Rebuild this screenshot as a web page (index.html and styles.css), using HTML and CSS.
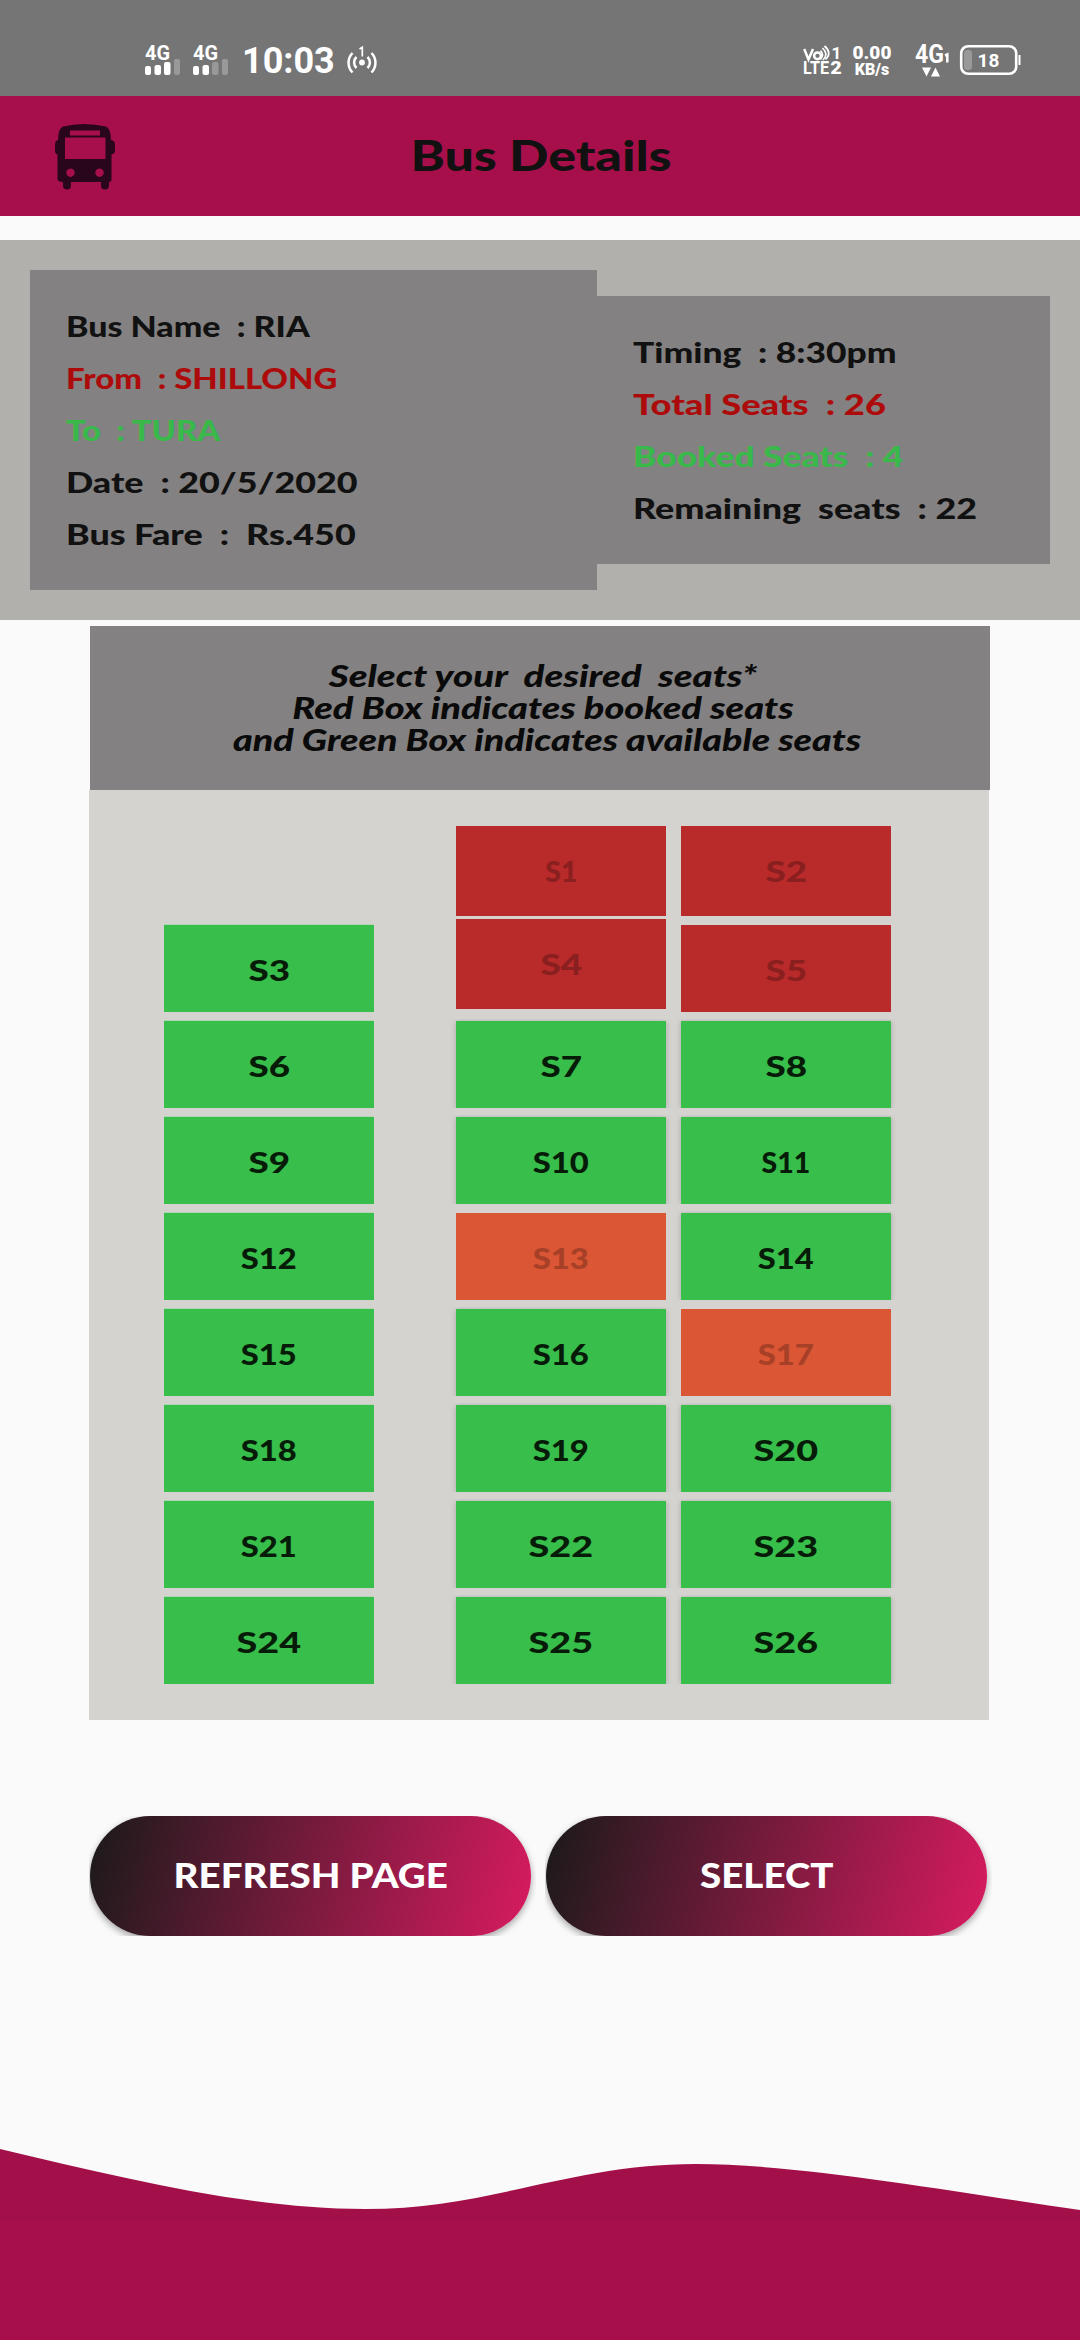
FILE: index.html
```html
<!DOCTYPE html>
<html lang="en">
<head>
<meta charset="utf-8">
<title>Bus Details</title>
<link rel="stylesheet" href="styles.css">
</head>
<body>
<div class="screen">
  <div class="status">
    <svg class="signal" width="36" height="32" viewBox="0 0 36 32">
      <text x="0" y="16" font-size="20.5" font-weight="700" textLength="25" lengthAdjust="spacingAndGlyphs">4G</text>
      <rect x="0" y="22" width="6" height="9" rx="2"/><rect x="9.5" y="21" width="6.5" height="10" rx="2"/><rect x="19" y="18" width="6.5" height="13" rx="2"/><rect class="off" x="29" y="15" width="6" height="16" rx="2"/>
    </svg>
    <svg class="signal" width="36" height="32" viewBox="0 0 36 32">
      <text x="0" y="16" font-size="20.5" font-weight="700" textLength="25" lengthAdjust="spacingAndGlyphs">4G</text>
      <rect x="0" y="22" width="6" height="9" rx="2"/><rect x="9.5" y="21" width="6.5" height="10" rx="2"/><rect class="off" x="19" y="18" width="6.5" height="13" rx="2"/><rect class="off" x="29" y="15" width="6" height="16" rx="2"/>
    </svg>
    <span class="clock">10:03</span>
    <svg class="hotspot" width="32" height="32" viewBox="0 0 32 32">
      <circle cx="16" cy="18.5" r="2.9"/>
      <path class="line" d="M10.500 13a7.500 7.500 0 0 0 0 11M21.500 13a7.500 7.500 0 0 1 0 11M6.500 9a14 14 0 0 0 0 19.500M25.500 9a14 14 0 0 1 0 19.500"/>
      <path class="thin" d="M13.500 5l2.800-1.800v9.300"/>
    </svg>
    <svg class="volte" width="40" height="32" viewBox="0 0 40 32">
      <path class="line" d="M1.200 5l4.300 10.500L10 5"/>
      <circle class="line" cx="14.500" cy="11.800" r="3.400"/>
      <path class="thin" d="M17.500 6.500q4 4 0 9M19.500 4q6.500 6 .5 12M21.500 2q8 7 1 13.500"/>
      <text x="28.500" y="15" font-size="17" font-weight="700">1</text>
      <text x="0" y="29.500" font-size="17.500" font-weight="700" textLength="26" lengthAdjust="spacingAndGlyphs">LTE</text>
      <text x="27.200" y="29.500" font-size="18" font-weight="900" textLength="11.500" lengthAdjust="spacingAndGlyphs">2</text>
    </svg>
    <div class="speed"><b>0.00</b><b class="unit">KB/s</b></div>
    <svg class="data" width="34" height="36" viewBox="0 0 34 36">
      <text x="0" y="18.500" font-size="25" font-weight="700" textLength="29" lengthAdjust="spacingAndGlyphs">4G</text>
      <path class="line" d="M30 11.500l2.300-1v8"/>
      <path d="M7 23.500h9l-4.500 9zM16 32.500h9l-4.500-9z"/>
    </svg>
    <svg class="battery" width="61" height="32" viewBox="0 0 61 32">
      <rect class="off" x="4" y="6" width="8" height="20" rx="3"/>
      <rect class="case" x="1.200" y="2.200" width="55" height="27.600" rx="7"/>
      <path d="M58.500 11h2v10h-2z"/>
      <text x="28.500" y="22.500" font-size="19" font-weight="700" text-anchor="middle">18</text>
    </svg>
  </div>

  <header class="appbar">
    <svg class="bus" width="60" height="66" viewBox="0 0 60 66">
      <path fill-rule="evenodd" d="M8 2.500Q29-2.500 51 2.500Q55.500 4 56 16q4 .500 4 5v5q0 4-3.500 4.500V56q0 2-2.500 2v3.500q0 4-4 4t-4-4V58H16v3.500q0 4-4 4t-4-4V58q-5.500 0-5.500-3V30.500Q0 30 0 26v-5q0-4.500 3-5Q3.500 4 8 2.500zM15 6.500v5h30v-5zM10 13.500v21.500h40.500V13.500zM15.500 44.500a4.200 4.200 0 1 0 .01 0zM44.500 44.500a4.200 4.200 0 1 0 .01 0z"/>
    </svg>
    <h1 class="title">Bus Details</h1>
  </header>

  <section class="info">
    <div class="card route">
      <p class="name">Bus Name  : RIA</p>
      <p class="from red">From  : SHILLONG</p>
      <p class="to green">To  : TURA</p>
      <p class="date">Date  : 20/5/2020</p>
      <p class="fare">Bus Fare  :  Rs.450</p>
    </div>
    <div class="card counts">
      <p class="timing">Timing  : 8:30pm</p>
      <p class="total red">Total Seats  : 26</p>
      <p class="booked-count green">Booked Seats  : 4</p>
      <p class="remaining">Remaining  seats  : 22</p>
    </div>
  </section>

  <div class="caption">
    <p class="cap1">Select your  desired  seats*</p>
    <p class="cap2">Red Box indicates booked seats</p>
    <p class="cap3">and Green Box indicates available seats</p>
  </div>

  <section class="seats">
    <div class="col window">
      <div class="seat one"><span>S3</span></div>
      <div class="seat one"><span>S6</span></div>
      <div class="seat one"><span>S9</span></div>
      <div class="seat"><span>S12</span></div>
      <div class="seat"><span>S15</span></div>
      <div class="seat"><span>S18</span></div>
      <div class="seat"><span>S21</span></div>
      <div class="seat wide"><span>S24</span></div>
    </div>
    <div class="col middle">
      <div class="seat booked narrow"><span>S1</span></div>
      <div class="seat booked raised one"><span>S4</span></div>
      <div class="seat one"><span>S7</span></div>
      <div class="seat"><span>S10</span></div>
      <div class="seat held"><span>S13</span></div>
      <div class="seat"><span>S16</span></div>
      <div class="seat"><span>S19</span></div>
      <div class="seat wide"><span>S22</span></div>
      <div class="seat wide"><span>S25</span></div>
    </div>
    <div class="col">
      <div class="seat booked tall one"><span>S2</span></div>
      <div class="seat booked one"><span>S5</span></div>
      <div class="seat one"><span>S8</span></div>
      <div class="seat narrow"><span>S11</span></div>
      <div class="seat"><span>S14</span></div>
      <div class="seat held"><span>S17</span></div>
      <div class="seat wide"><span>S20</span></div>
      <div class="seat wide"><span>S23</span></div>
      <div class="seat wide"><span>S26</span></div>
    </div>
  </section>

  <div class="actions">
    <div class="button"><span>REFRESH PAGE</span></div>
    <div class="button"><span>SELECT</span></div>
  </div>

  <svg class="wave" width="1080" height="191" viewBox="0 0 1080 191">
    <path fill="#a30f48" d="M0 0C120 28 245 60 365 60C490 60 570 15 696 15C800 15 960 44 1080 61V191H0z"/>
    <path fill="#a60f4a" d="M0 71h1080v120H0z"/>
  </svg>
</div>
</body>
</html>
```
FILE: styles.css
```css
* { box-sizing: border-box; }
body { margin: 0; background: #fafafa; color: #111; font-family: Lato, sans-serif; font-weight: 900; }
p, h1 { margin: 0; white-space: pre; }
.screen { width: 1080px; height: 2340px; display: flex; flex-direction: column; overflow: hidden; }

.status { height: 96px; flex: none; background: #757575; display: flex; align-items: flex-start; padding: 44px 60px 0 145px; color: #fff; font-family: Roboto, sans-serif; }
.status svg { flex: none; fill: #fff; overflow: visible; }
.status text { font-family: Roboto, sans-serif; }
.status .off { fill: #999; }
.status .line { fill: none; stroke: #fff; stroke-width: 2.5; }
.status .thin { fill: none; stroke: #fff; stroke-width: 1.7; }
.status .case { fill: none; stroke: #fff; stroke-width: 2.6; }
.signal { margin-right: 12px; }
.clock { width: 92px; font-size: 36px; line-height: 34px; font-weight: 700; margin-left: 1px; }
.hotspot { margin-left: 12px; }
.volte { margin-left: 425px; }
.speed { width: 36px; margin-left: 11px; display: flex; flex-direction: column; align-items: center; font-size: 19px; line-height: 18px; font-weight: 700; }
.unit { font-size: 16px; line-height: 15px; }
.data { margin-left: 25px; }
.battery { margin-left: 11px; }

.appbar { height: 120px; flex: none; background: #a60f4a; display: flex; align-items: flex-start; padding: 28px 0 0 55px; }
.bus { flex: none; fill: #29061a; }
.title { width: 850px; margin: -29px 0 0 1px; text-align: center; font-size: 41.5px; line-height: 120px; font-weight: 900; transform: scaleX(1.25); }

.info { height: 380px; flex: none; margin-top: 24px; padding: 0 30px; background: #b1b0ad; display: flex; align-items: center; }
.card { background: #838181; padding: 30px 36px; font-size: 29px; line-height: 52px; }
.card p { transform-origin: 0 50%; }
.route { width: 567px; }
.counts { width: 453px; }
.red { color: #ad0b0b; }
.green { color: #38b94a; }
.name { transform: scaleX(1.17); }
.from { transform: scaleX(1.135); }
.to { transform: scaleX(1.13); }
.date, .fare, .remaining { transform: scaleX(1.235); }
.timing, .booked-count { transform: scaleX(1.22); }
.total { transform: scaleX(1.25); }

.caption { width: 900px; height: 164px; flex: none; margin: 6px 0 0 90px; padding-top: 33px; background: #838181; color: #0a0a0a; text-align: center; font-size: 30px; line-height: 32px; font-style: italic; }
.cap1 { transform: translateX(3px) scaleX(1.28); }
.cap2 { transform: translateX(3px) scaleX(1.265); }
.cap3 { transform: translateX(7px) scaleX(1.255); }

.seats { width: 900px; height: 930px; flex: none; margin-left: 89px; padding: 36px 0 0 75px; background: #d4d3d0; display: flex; }
.col { width: 210px; display: flex; flex-direction: column; gap: 9px; }
.window { padding-top: 99px; }
.middle { margin: 0 15px 0 82px; }
.seat { height: 87px; background: #38be4b; color: #061c08; text-align: center; font-size: 29px; line-height: 90px; box-shadow: 0 1px 6px rgba(0, 0, 0, .2); clip-path: inset(-2px -7px 0 -7px); }
.window .seat { clip-path: inset(-1px 0 0 0); box-shadow: 0 0 3px #7ad486; }
.seat span { display: inline-block; transform: scaleX(1.13); }
.one span { transform: scaleX(1.27); }
.wide span { transform: scaleX(1.3); }
.narrow span { transform: scaleX(.98); }
.seat.booked, .seat.held { box-shadow: none; }
.booked { background: #b92a2a; color: #8a1f1f; }
.held { background: #da5634; color: #a64027; }
.tall, .booked.narrow { height: 90px; }
.raised { height: 90px; margin: -6px 0 3px; }

.actions { display: flex; gap: 15px; flex: none; margin: 96px 0 0 90px; }
.button { width: 441px; height: 120px; border-radius: 60px; background: linear-gradient(105.2deg, #1a1a1a, #d81b60); color: #fff; text-align: center; font-size: 33.3px; line-height: 119px; box-shadow: 0 3px 7px rgba(0, 0, 0, .35); clip-path: inset(0 -5px 0 -1px); }
.button span { display: inline-block; transform: scaleX(1.155); }

.wave { display: block; margin-top: auto; flex: none; }
```
